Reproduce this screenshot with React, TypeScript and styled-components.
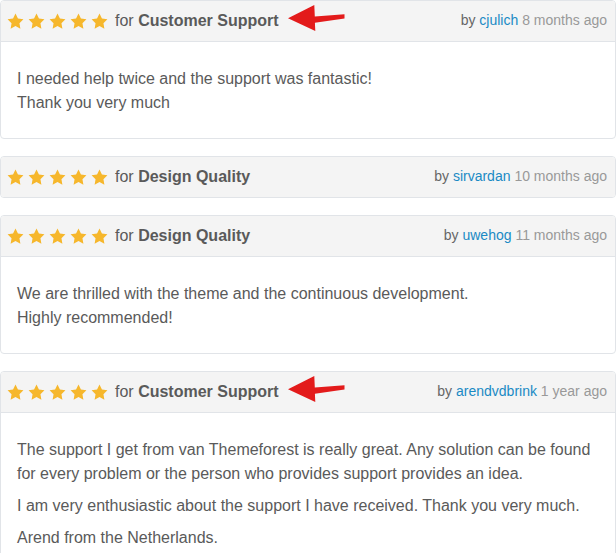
import styled, { createGlobalStyle } from 'styled-components'

type Review = {
  id: number
  category: string
  author: string
  when: string
  paragraphs: string[][]
  flagged?: boolean
}

const reviews: Review[] = [
  {
    id: 1,
    category: 'Customer Support',
    author: 'cjulich',
    when: '8 months ago',
    flagged: true,
    paragraphs: [['I needed help twice and the support was fantastic!', 'Thank you very much']],
  },
  {
    id: 2,
    category: 'Design Quality',
    author: 'sirvardan',
    when: '10 months ago',
    paragraphs: [],
  },
  {
    id: 3,
    category: 'Design Quality',
    author: 'uwehog',
    when: '11 months ago',
    paragraphs: [
      ['We are thrilled with the theme and the continuous development.', 'Highly recommended!'],
    ],
  },
  {
    id: 4,
    category: 'Customer Support',
    author: 'arendvdbrink',
    when: '1 year ago',
    flagged: true,
    paragraphs: [
      [
        'The support I get from van Themeforest is really great. Any solution can be found for every problem or the person who provides support provides an idea.',
      ],
      ['I am very enthusiastic about the support I have received. Thank you very much.'],
      ['Arend from the Netherlands.'],
    ],
  },
]

export default function App() {
  return (
    <>
      <GlobalStyle />
      <List>
        {reviews.map((review) => (
          <ReviewCard key={review.id} review={review} />
        ))}
      </List>
    </>
  )
}

function ReviewCard({ review }: { review: Review }) {
  const hasBody = review.paragraphs.length > 0
  return (
    <Card>
      <Header $divided={hasBody}>
        <Rating>
          {[0, 1, 2, 3, 4].map((i) => (
            <Star key={i} />
          ))}
        </Rating>
        <Title>
          for <strong>{review.category}</strong>
        </Title>
        {review.flagged && <Pointer />}
        <Meta>
          by <AuthorLink href="#">{review.author}</AuthorLink> <When>{review.when}</When>
        </Meta>
      </Header>
      {hasBody && (
        <Body>
          {review.paragraphs.map((lines, i) => (
            <Paragraph key={i}>
              {lines.map((line, j) => (
                <span key={j}>
                  {j > 0 && <br />}
                  {line}
                </span>
              ))}
            </Paragraph>
          ))}
        </Body>
      )}
    </Card>
  )
}

function Star() {
  return (
    <StarSvg viewBox="0 0 24 24" aria-hidden>
      <path d="M12 2l3.09 6.26L22 9.27l-5 4.87 1.18 6.88L12 17.77l-6.18 3.25L7 14.14 2 9.27l6.91-1.01L12 2z" />
    </StarSvg>
  )
}

// hand-drawn red annotation arrow pointing back at the category
function Pointer() {
  return (
    <PointerSvg viewBox="0 0 60 28" aria-hidden>
      <polygon points="1,14.3 27.3,1 27.8,12.6 57.5,10.2 57.5,14.4 27.9,18.8 28.3,27" />
    </PointerSvg>
  )
}

const GlobalStyle = createGlobalStyle`
  html, body {
    margin: 0;
    padding: 0;
    background: #fff;
  }
  body {
    font-family: "Liberation Sans", Arial, sans-serif;
    color: #5a5a5a;
  }
`

const List = styled.div`
  display: flex;
  flex-direction: column;
  gap: 17px;
  width: 616px;
`

const Card = styled.div`
  border: 1px solid #e1e4e8;
  border-radius: 4px;
  background: #fff;
  overflow: hidden;
`

const Header = styled.div<{ $divided: boolean }>`
  display: flex;
  align-items: center;
  height: 40px;
  padding: 0 8px 0 5px;
  background: #f4f4f4;
  border-bottom: ${({ $divided }) => ($divided ? '1px solid #e1e4e8' : 'none')};
`

const Rating = styled.div`
  display: flex;
  gap: 2px;
`

const StarSvg = styled.svg`
  width: 19px;
  height: 19px;
  fill: #f6b72c;
`

const Title = styled.span`
  margin-left: 6px;
  font-size: 16px;
  color: #5a5a5a;

  strong {
    font-weight: bold;
  }
`

const PointerSvg = styled.svg`
  width: 60px;
  height: 28px;
  margin: -7px 0 0 8px;
  fill: #e31b1b;
`

const Meta = styled.span`
  margin-left: auto;
  padding-bottom: 2px;
  font-size: 14px;
  color: #666;
`

const AuthorLink = styled.a`
  color: #1a8ac4;
  text-decoration: none;
`

const When = styled.span`
  color: #999;
`

const Body = styled.div`
  padding: 25px 16px 23px;
  font-size: 16px;
  line-height: 24px;
  color: #5a5a5a;
`

const Paragraph = styled.p`
  margin: 0 0 8px;

  &:last-child {
    margin-bottom: 0;
  }
`
